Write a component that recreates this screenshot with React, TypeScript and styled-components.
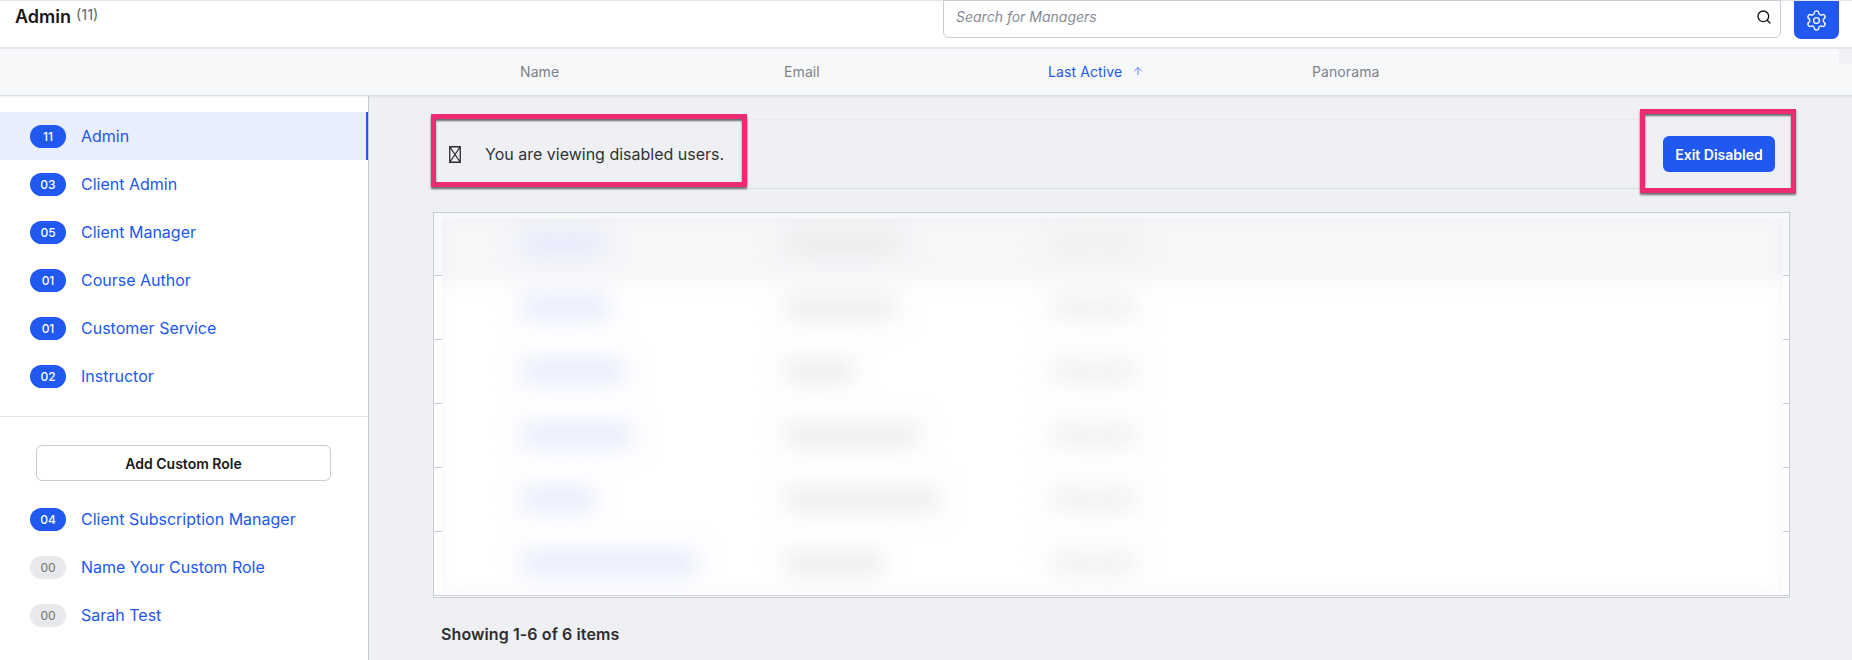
import React from "react";
import styled, { createGlobalStyle } from "styled-components";
import { Search, Settings, ArrowUp } from "lucide-react";

const Global = createGlobalStyle`
  html, body { margin: 0; padding: 0; height: 660px; overflow: hidden; background: #eff0f3; }
  body { font-family: Inter, "Liberation Sans", sans-serif; }
  * { box-sizing: border-box; }
`;

const Page = styled.div`
  width: 1852px;
  height: 660px;
  display: flex;
  flex-direction: column;
  overflow: hidden;
`;

const Header = styled.header`
  height: 49px;
  background: #fff;
  border-top: 1px solid #e3e5e9;
  border-bottom: 2px solid #e6e8ec;
  display: flex;
  align-items: flex-start;
  padding: 0 13px 0 15px;
`;

const Title = styled.h1`
  margin: 5px 0 0;
  font-size: 18px;
  font-weight: 600;
  line-height: 22px;
  color: #17181a;
`;

const Count = styled.span`
  margin: 5px 0 0 5px;
  font-size: 14.5px;
  line-height: 18px;
  color: #5f6368;
`;

const SearchBox = styled.div`
  margin-left: auto;
  width: 838px;
  height: 38px;
  margin-top: -1px;
  border: 1px solid #c8ccd6;
  border-radius: 0 0 6px 6px;
  display: flex;
  align-items: center;
  justify-content: space-between;
  padding: 0 8px 5px 12px;
  color: #111;
`;

const Placeholder = styled.span`
  font-size: 14px;
  font-style: italic;
  color: #858b96;
`;

const GearButton = styled.div`
  margin-left: 13px;
  width: 45px;
  height: 38px;
  background: #2058f0;
  border-radius: 0 0 7px 7px;
  display: flex;
  align-items: center;
  justify-content: center;
  color: #fff;
`;

const ColumnBar = styled.div`
  height: 47px;
  background: #f7f8fa;
  border-bottom: 1px solid #dcdfe4;
  box-shadow: 0 1px 2px rgba(0, 0, 0, 0.08);
  display: grid;
  grid-template-columns: 264px 264px 264px 264px;
  padding: 0 0 2px 520px;
  align-items: center;
  position: relative;
  z-index: 1;

  &::after {
    content: "";
    position: absolute;
    top: 0;
    right: 0;
    width: 13px;
    height: 15px;
    background: #f0f1f4;
  }
`;

const ColumnLabel = styled.div<{ $active?: boolean }>`
  display: flex;
  align-items: center;
  gap: 10px;
  font-size: 14px;
  letter-spacing: 0.1px;
  color: ${(p) => (p.$active ? "#2058f0" : "#7c828a")};

  svg {
    color: #5f87f2;
  }
`;

const Body = styled.div`
  flex: 1;
  display: flex;
  min-height: 0;
`;

const Sidebar = styled.aside`
  width: 369px;
  background: #fff;
  border-right: 1px solid #c8ccd6;
  padding-top: 16px;
  flex: none;
`;

const RoleRow = styled.div<{ $active?: boolean }>`
  height: 48px;
  display: flex;
  align-items: center;
  gap: 15px;
  padding-left: 30px;
  background: ${(p) => (p.$active ? "#e8eefb" : "transparent")};
  box-shadow: ${(p) => (p.$active ? "inset -2px 0 0 #2058f0" : "none")};
`;

const Badge = styled.span<{ $empty?: boolean }>`
  width: 36px;
  height: 23px;
  border-radius: 12px;
  display: flex;
  align-items: center;
  justify-content: center;
  font-size: 12px;
  font-weight: ${(p) => (p.$empty ? 400 : 500)};
  background: ${(p) => (p.$empty ? "#e7e9ec" : "#2058f0")};
  color: ${(p) => (p.$empty ? "#6f757d" : "#fff")};
`;

const RoleName = styled.span`
  font-size: 16px;
  color: #2058f0;
`;

const Divider = styled.hr`
  margin: 16px 0 0;
  border: 0;
  border-top: 1px solid #e2e4e8;
`;

const AddRole = styled.button`
  display: block;
  width: 295px;
  height: 36px;
  margin: 28px 0 14px 36px;
  background: #fff;
  border: 1px solid #c8ccd6;
  border-radius: 6px;
  font-family: inherit;
  font-size: 14px;
  font-weight: 600;
  color: #17181a;
`;

const Main = styled.main`
  flex: 1;
  padding: 23px 62px 0 64px;
  display: flex;
  flex-direction: column;
`;

const Notice = styled.div`
  height: 70px;
  flex: none;
  border-top: 1px solid #e9eaee;
  border-bottom: 1px solid #d8dbe1;
  display: flex;
  align-items: center;
  justify-content: space-between;
  padding: 0 15px 0 16px;
`;

const Annotated = styled.div<{ $inset: string }>`
  position: relative;
  display: flex;
  align-items: center;

  &::after {
    content: "";
    position: absolute;
    inset: ${(p) => p.$inset};
    border: 5px solid #ed2a73;
    box-shadow: 0 2px 2px rgba(0, 0, 0, 0.55), inset 0 2px 2px rgba(0, 0, 0, 0.55);
    pointer-events: none;
  }
`;

const MissingGlyph = styled.svg`
  width: 12px;
  height: 17px;
  margin-right: 24px;
  flex: none;
`;

const NoticeText = styled.span`
  font-size: 16px;
  line-height: 20px;
  color: #303236;
`;

const ExitButton = styled.button`
  width: 112px;
  height: 36px;
  border: 0;
  border-radius: 6px;
  background: #2058f0;
  color: #fff;
  font-family: inherit;
  font-size: 14px;
  font-weight: 600;
`;

const TableFrame = styled.div`
  position: relative;
  margin-top: 23px;
  height: 386px;
  flex: none;
  background: #fff;
  border: 1px solid #c8ccd6;
  overflow: hidden;
`;

const EdgeRow = styled.div<{ $head?: boolean }>`
  height: 64px;
  border-bottom: 1px solid #c8ccd6;
  background: ${(p) => (p.$head ? "#f7f8fa" : "#fff")};

  &:first-child {
    height: 63px;
  }

  &:last-of-type {
    border-bottom: 0;
  }
`;

const BlurPanel = styled.div`
  position: absolute;
  top: 6px;
  left: 8px;
  right: 6px;
  bottom: 4px;
  background: linear-gradient(#f6f7f9 0, #f6f7f9 50px, #ffffff 78px);
  box-shadow: inset 0 0 18px rgba(60, 70, 90, 0.035);
  overflow: hidden;
`;

const BlurRows = styled.div`
  display: flex;
  flex-direction: column;
  margin-top: -8px;
  filter: blur(12px);
`;

const BlurRow = styled.div`
  height: 64px;
  display: grid;
  grid-template-columns: 264px 264px 1fr;
  align-items: center;
  padding-left: 78px;
`;

const Smudge = styled.div<{ $tone: "name" | "mail" | "date" }>`
  height: 22px;
  border-radius: 8px;
  background: ${(p) =>
    p.$tone === "name" ? "#e3e8fc" : p.$tone === "mail" ? "#e9eaeb" : "#eeefef"};
`;

const Footer = styled.div`
  margin: 26px 0 0 8px;
  font-size: 16px;
  font-weight: 600;
  letter-spacing: 0.1px;
  line-height: 20px;
  color: #2b2d31;
`;

const roles = [
  { n: "11", name: "Admin", active: true },
  { n: "03", name: "Client Admin" },
  { n: "05", name: "Client Manager" },
  { n: "01", name: "Course Author" },
  { n: "01", name: "Customer Service" },
  { n: "02", name: "Instructor" },
];

const custom = [
  { n: "04", name: "Client Subscription Manager" },
  { n: "00", name: "Name Your Custom Role", empty: true },
  { n: "00", name: "Sarah Test", empty: true },
];

const smudges = [
  [85, 118, 91],
  [91, 113, 91],
  [106, 71, 91],
  [114, 136, 91],
  [76, 157, 91],
  [179, 101, 91],
];

export default function App() {
  return (
    <Page>
      <Global />
      <Header>
        <Title>Admin</Title>
        <Count>(11)</Count>
        <SearchBox>
          <Placeholder>Search for Managers</Placeholder>
          <Search size={16} strokeWidth={2} />
        </SearchBox>
        <GearButton>
          <Settings size={23} strokeWidth={1.4} />
        </GearButton>
      </Header>
      <ColumnBar>
        <ColumnLabel>Name</ColumnLabel>
        <ColumnLabel>Email</ColumnLabel>
        <ColumnLabel $active>
          Last Active
          <ArrowUp size={12} strokeWidth={2} />
        </ColumnLabel>
        <ColumnLabel>Panorama</ColumnLabel>
      </ColumnBar>
      <Body>
        <Sidebar>
          {roles.map((r) => (
            <RoleRow key={r.name} $active={r.active}>
              <Badge>{r.n}</Badge>
              <RoleName>{r.name}</RoleName>
            </RoleRow>
          ))}
          <Divider />
          <AddRole>Add Custom Role</AddRole>
          {custom.map((r) => (
            <RoleRow key={r.name}>
              <Badge $empty={r.empty}>{r.n}</Badge>
              <RoleName>{r.name}</RoleName>
            </RoleRow>
          ))}
        </Sidebar>
        <Main>
          <Notice>
            <Annotated $inset="-30px -23px -23px -18px">
              <MissingGlyph viewBox="0 0 12 17">
                <path
                  d="M.75.75h10.5v15.5H.75zM.75.75l10.5 15.5M11.25.75L.75 16.25"
                  fill="none"
                  stroke="#2b2d31"
                  strokeWidth="1.3"
                />
              </MissingGlyph>
              <NoticeText>You are viewing disabled users.</NoticeText>
            </Annotated>
            <Annotated $inset="-27px -21px -21px -23px">
              <ExitButton>Exit Disabled</ExitButton>
            </Annotated>
          </Notice>
          <TableFrame>
            <EdgeRow $head />
            <EdgeRow />
            <EdgeRow />
            <EdgeRow />
            <EdgeRow />
            <EdgeRow />
            <BlurPanel>
              <BlurRows>
                {smudges.map((s, i) => (
                  <BlurRow key={i}>
                    <Smudge $tone="name" style={{ width: s[0] }} />
                    <Smudge $tone="mail" style={{ width: s[1] }} />
                    <Smudge $tone="date" style={{ width: s[2] }} />
                  </BlurRow>
                ))}
              </BlurRows>
            </BlurPanel>
          </TableFrame>
          <Footer>Showing 1-6 of 6 items</Footer>
        </Main>
      </Body>
    </Page>
  );
}
